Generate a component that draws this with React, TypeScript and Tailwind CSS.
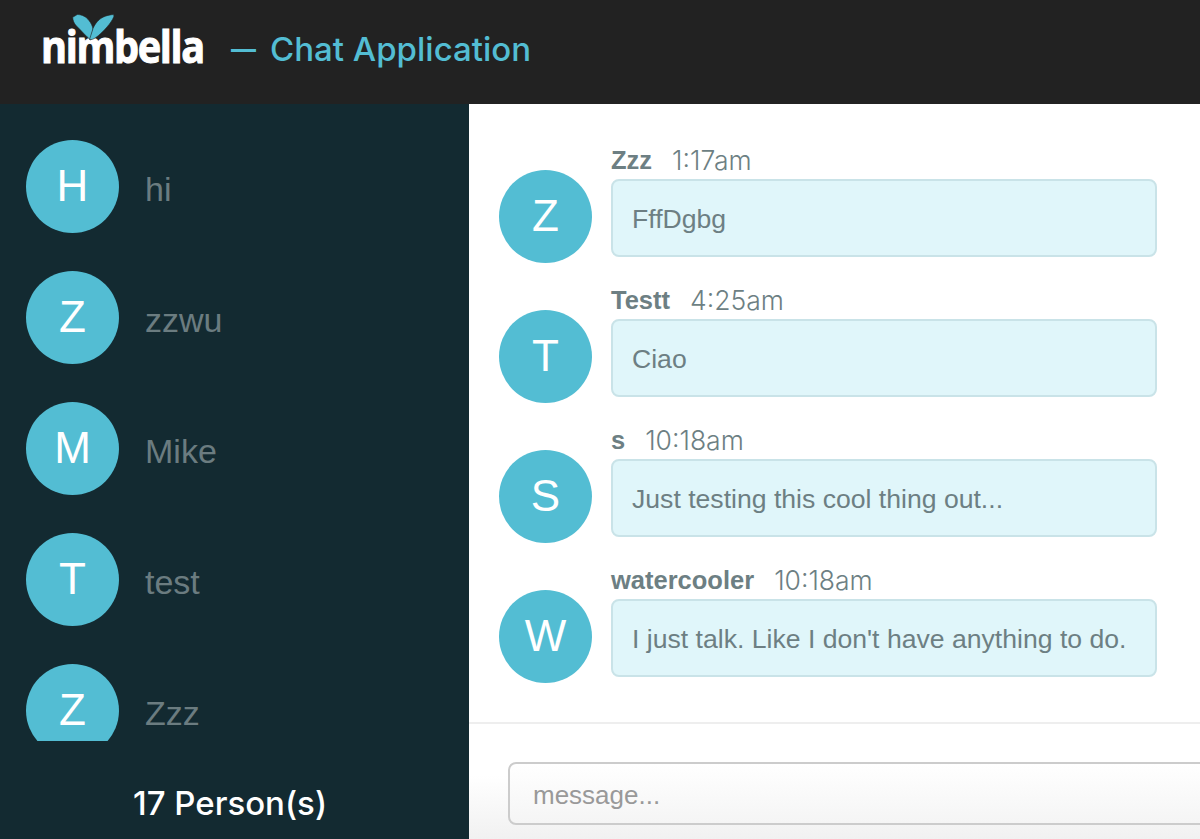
const people = [
  { letter: "H", name: "hi" },
  { letter: "Z", name: "zzwu" },
  { letter: "M", name: "Mike" },
  { letter: "T", name: "test" },
  { letter: "Z", name: "Zzz" },
];

const messages = [
  { letter: "Z", name: "Zzz", time: "1:17am", text: "FffDgbg" },
  { letter: "T", name: "Testt", time: "4:25am", text: "Ciao" },
  { letter: "S", name: "s", time: "10:18am", text: "Just testing this cool thing out..." },
  { letter: "W", name: "watercooler", time: "10:18am", text: "I just talk. Like I don't have anything to do." },
];

function Avatar({ letter }: { letter: string }) {
  return (
    <div className="w-[93px] h-[93px] shrink-0 rounded-full bg-[#53bdd3] flex items-center justify-center pb-[2px] text-white text-[44px] leading-none">
      {letter}
    </div>
  );
}

function Logo() {
  return (
    <div className="relative w-[162px] h-[50px] mt-[-6px]">
      <span className="absolute left-[-1px] top-[-3px] origin-left scale-x-[0.9] text-white text-[44px] leading-[50px] font-bold tracking-[-1.5px] [-webkit-text-stroke:1px_white] font-['Open_Sans',sans-serif]">
        nimbella
      </span>
      <svg className="absolute left-[28px] top-[-12px]" width="46" height="30" viewBox="0 0 46 30">
        <path
          d="M2.7 5.3 L7.3 2.5 C12 2.5 16.5 5 19 8.5 C21 11 22.5 14 23 17 L20.5 28 C16 24 12 19.5 9 16.5 L6.5 14 C4 11.5 2.8 8.5 2.7 5.3 Z"
          fill="#53bdd3"
          stroke="#222222"
          strokeWidth="0.6"
        />
        <path
          d="M43.8 2.5 C37 3 32.5 5 29.5 7.5 C26.5 10 24.5 13 23 16.5 L19.5 27.5 C21.5 28 23.5 27 25.5 25.8 C29.5 23 33.5 19 37 15 C40 11.5 42.5 8 43.8 4.7 Z"
          fill="#53bdd3"
          stroke="#222222"
          strokeWidth="0.6"
        />
      </svg>
    </div>
  );
}

export default function App() {
  return (
    <div className="h-[839px] w-[1200px] overflow-hidden flex flex-col font-['Liberation_Sans',Arial,sans-serif]">
      <header className="h-[104px] shrink-0 bg-[#222222] flex items-center pl-[42px]">
        <Logo />
        <div className="ml-[27px] mt-[-5px] flex items-center gap-[14px] text-[#53bdd3] text-[33px] leading-none font-medium font-['Inter',sans-serif]">
          <span className="text-[25px] font-bold">—</span>
          <span>Chat Application</span>
        </div>
      </header>

      <div className="flex-1 flex min-h-0">
        <aside className="w-[469px] shrink-0 bg-[#132a31] flex flex-col">
          <div className="h-[637px] overflow-hidden pt-[36px] pl-[26px] flex flex-col gap-[38px]">
            {people.map((p, i) => (
              <div key={i} className="flex items-center gap-[26px]">
                <Avatar letter={p.letter} />
                <span className="text-[#6b7c80] text-[34px] leading-none pt-[4px]">{p.name}</span>
              </div>
            ))}
          </div>
          <div className="flex-1 flex justify-center pt-[44px] pr-[9px] text-white text-[33px] leading-[36px] font-medium font-['Inter',sans-serif]">
            17 Person(s)
          </div>
        </aside>

        <main className="flex-1 min-w-0 bg-white flex flex-col">
          <div className="h-[620px] shrink-0 border-b-2 border-[#eeeeee] pt-[44px] pl-[30px] flex flex-col gap-[25px]">
            {messages.map((m, i) => (
              <div key={i} className="flex gap-[19px]">
                <div className="pt-[22px]">
                  <Avatar letter={m.letter} />
                </div>
                <div className="w-[546px]">
                  <div className="h-[31px] flex items-center gap-[20px] pb-[6px] text-[#6d7f83] text-[25.5px] leading-none">
                    <span className="font-bold">{m.name}</span>
                    <span className="font-light text-[26.5px] font-['Inter',sans-serif]">{m.time}</span>
                  </div>
                  <div className="h-[78px] rounded-lg border-2 border-[#c9e3e8] bg-[#e0f6fa] flex items-center pl-[19px] pt-[2px] text-[#6d7f83] text-[26.6px] leading-none">
                    {m.text}
                  </div>
                </div>
              </div>
            ))}
          </div>
          <div className="flex-1 bg-gradient-to-b from-white from-45% to-[#f1f1f1] pt-[38px] pl-[39px]">
            <input
              placeholder="message..."
              className="w-[800px] h-[63px] rounded-lg border-2 border-[#cccccc] bg-gradient-to-b from-white to-[#f5f5f5] pl-[23px] pt-[3px] text-[26px] placeholder:text-[#999999] outline-none"
            />
          </div>
        </main>
      </div>
    </div>
  );
}
